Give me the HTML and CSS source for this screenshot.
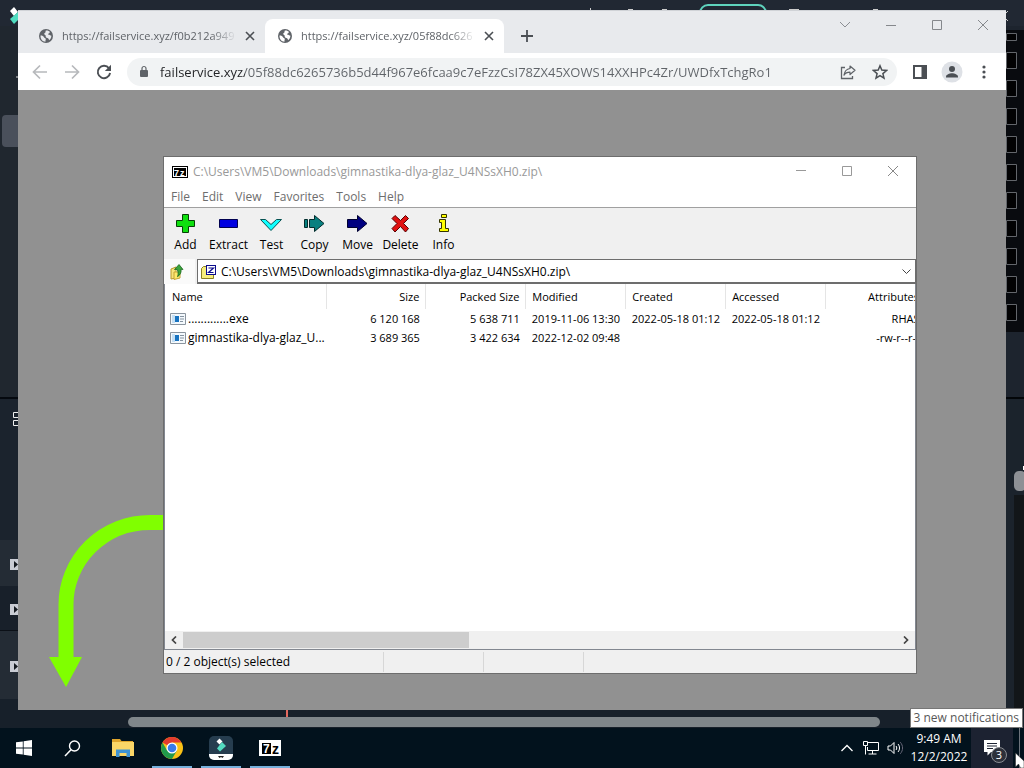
FILE: index.html
```html
<!DOCTYPE html>
<html lang="en">
  <head>
    <meta charset="UTF-8" />
    <meta name="viewport" content="width=device-width, initial-scale=1.0" />
    <title>Desktop</title>
    <link rel="stylesheet" href="styles.css">
  </head>
  <body>
    <main class="desktop">
      <!-- Video editor behind the other windows -->
      <div class="editor">
        <div class="editor-top">
          <svg width="20" height="26" viewBox="0 0 20 26"><path d="M14 7l4 5-4 4-4-5z" fill="#fff"/><path d="M10 19l8-7v8l-4 4z" fill="#4fdcc0"/></svg>
          <svg width="434" height="26" viewBox="0 0 434 26">
            <rect x="110" y="5" width="66" height="20" rx="8" fill="none" stroke="#5fd3bd" stroke-width="2"/>
            <path d="M0 8h1v2H0zM38 9h5v1h-5zM72 9h5v1h-5zM199 9h10v1h-10zM283 9h5v1h-5z" fill="#ccc"/>
            <path d="M418 11l-5 5 5 5" fill="none" stroke="#ccc"/>
          </svg>
        </div>
        <div class="editor-middle">
          <svg width="18" height="684" viewBox="0 26 18 684">
            <rect y="26" width="18" height="372" fill="#20272f"/>
            <rect x="2" y="115" width="24" height="32" rx="4" fill="#4a505b"/>
            <path d="M16 77h2" stroke="#ddd"/>
            <rect y="397" width="18" height="2" fill="#05090f"/>
            <rect y="399" width="18" height="141" fill="#1b232d"/>
            <path d="M18 412.500h-4.500v5h4.500M18 420.500h-4.500v5h4.500" fill="none" stroke="#eee"/>
            <rect y="540" width="18" height="46" fill="#242c35"/>
            <rect y="586" width="18" height="44" fill="#18202a"/>
            <rect y="630" width="18" height="1" fill="#0b1017"/>
            <rect y="631" width="18" height="68" fill="#242c35"/>
            <rect y="699" width="18" height="11" fill="#17202a"/>
            <path d="M10 559h8v11h-8zM10 604h8v11h-8zM10 661h8v11h-8z" fill="#c9ccd4"/>
            <path d="M14 561l4 3.500-4 3.500zM14 606l4 3.500-4 3.500zM14 663l4 3.500-4 3.500z" fill="#151a20"/>
          </svg>
          <svg width="18" height="684" viewBox="0 26 18 684">
            <rect y="26" width="18" height="372" fill="#1d242e"/>
            <rect y="30" width="18" height="302" fill="#090b0f"/>
            <path d="M0 33h10v7H0zM0 52h10v16H0zM0 80h10v16H0zM0 108h10v16H0zM0 136h10v16H0zM0 164h10v16H0zM0 192h10v16H0zM0 220h10v16H0zM0 248h10v16H0zM0 276h10v16H0zM0 304h10v16H0z" transform="translate(.5 .5)" fill="#020203" stroke="#63666b"/>
            <rect y="397" width="18" height="2" fill="#030609"/>
            <rect y="399" width="18" height="311" fill="#1b232c"/>
            <rect x="8" y="495" width="10" height="215" fill="#121619"/>
            <rect x="8" y="471" width="12" height="20" rx="5" fill="#8d9095"/>
            <path d="M17 466h1v4h-1z" fill="#fff"/>
          </svg>
        </div>
        <div class="editor-bottom">
          <span class="playhead"></span>
          <span class="editor-scroll"></span>
        </div>
      </div>

      <section class="browser">
        <div class="tab-strip">
          <div class="tab">
            <svg width="16" height="16" viewBox="0 0 16 16"><circle cx="8" cy="8" r="7" fill="#5f6368"/><path d="M2.500 7.500c2 0 3 .6 3.500 1.800.4 1 1.300.6 1.700 1.500.3.900-.4 1.500-.2 3C4.500 13.600 2.300 11 2.500 7.500zM8 2.500c1.500-.3 3 .3 4.200 1.500-.8.200-.6 1.300-1.500 1.400-.7 0-1 .9-.3 1.200 1.300.3 2 1.200 3 1.200-.1 2-1 3.600-2.400 4.500 0-1.600-.8-2-1.600-2.300-1.200-.4-1.900-1-1.700-2.100.2-1-1.400-.8-1.500-1.900-.100-.9 1-1 1.300-1.800.200-.6-.1-1.300.5-1.700z" fill="#e8eaed"/></svg>
            <a class="tab-title" href="#">https://failservice.xyz/f0b212a949</a>
            <button class="tab-close" aria-label="Close tab"><svg width="10" height="10" viewBox="0 0 10 10"><path d="M1 1l8 8M9 1L1 9" stroke="#4b4f54" stroke-width="1.600"/></svg></button>
          </div>
          <div class="tab active">
            <svg width="16" height="16" viewBox="0 0 16 16"><circle cx="8" cy="8" r="7" fill="#5f6368"/><path d="M2.500 7.500c2 0 3 .6 3.500 1.800.4 1 1.300.6 1.700 1.500.3.900-.4 1.500-.2 3C4.500 13.600 2.300 11 2.500 7.500zM8 2.500c1.500-.3 3 .3 4.200 1.500-.8.200-.6 1.300-1.500 1.400-.7 0-1 .9-.3 1.200 1.300.3 2 1.200 3 1.200-.1 2-1 3.600-2.400 4.500 0-1.600-.8-2-1.600-2.300-1.200-.4-1.900-1-1.700-2.100.2-1-1.400-.8-1.500-1.900-.100-.9 1-1 1.300-1.800.200-.6-.1-1.300.5-1.700z" fill="#fff"/></svg>
            <a class="tab-title" href="#">https://failservice.xyz/05f88dc626</a>
            <button class="tab-close" aria-label="Close tab"><svg width="10" height="10" viewBox="0 0 10 10"><path d="M1 1l8 8M9 1L1 9" stroke="#4b4f54" stroke-width="1.600"/></svg></button>
          </div>
          <button class="new-tab" aria-label="New tab"><svg width="12" height="12" viewBox="0 0 12 12"><path d="M6 0v12M0 6h12" stroke="#4b4f54" stroke-width="1.800"/></svg></button>
          <div class="window-buttons">
            <button aria-label="Search tabs"><svg width="12" height="12" viewBox="0 0 12 12"><path d="M1 3l5 5 5-5" fill="none" stroke="#8b8e93"/></svg></button>
            <button aria-label="Minimize"><svg width="10" height="10" viewBox="0 0 10 10"><path d="M0 5.500h10" stroke="#85888c"/></svg></button>
            <button aria-label="Maximize"><svg width="10" height="10" viewBox="0 0 10 10"><path d="M.5.500h9v9h-9z" fill="none" stroke="#85888c"/></svg></button>
            <button aria-label="Close"><svg width="10" height="10" viewBox="0 0 10 10"><path d="M0 0l10 10M10 0L0 10" stroke="#85888c"/></svg></button>
          </div>
        </div>

        <div class="nav-bar">
          <button aria-label="Back"><svg width="16" height="16" viewBox="0 0 16 16"><path d="M15 8H2M8 1.500L1.500 8 8 14.500" fill="none" stroke="#b7b9bc" stroke-width="1.700"/></svg></button>
          <button aria-label="Forward"><svg width="16" height="16" viewBox="0 0 16 16"><path d="M1 8h13M8 1.500L14.500 8 8 14.500" fill="none" stroke="#b7b9bc" stroke-width="1.700"/></svg></button>
          <button aria-label="Reload"><svg width="16" height="16" viewBox="0 0 16 16"><path d="M13 4.300A6.200 6.200 0 1 0 14.100 9" fill="none" stroke="#4b4f54" stroke-width="1.900"/><path d="M15 .800v6.200H8.800z" fill="#4b4f54"/></svg></button>
          <div class="omnibox">
            <svg width="10" height="14" viewBox="0 0 10 14"><rect x="1" y="5" width="8" height="7" rx="1" fill="#5f6368"/><path d="M3 5.500V3.500a2 2 0 0 1 4 0v2" fill="none" stroke="#5f6368" stroke-width="1.200"/></svg>
            <input class="url" type="text" aria-label="Address" value="failservice.xyz/05f88dc6265736b5d44f967e6fcaa9c7eFzzCsI78ZX45XOWS14XXHPc4Zr/UWDfxTchgRo1">
            <button aria-label="Share"><svg width="16" height="16" viewBox="0 0 16 16"><path d="M5 3.500H1.500v11h11V12" fill="none" stroke="#5f6368" stroke-width="1.300"/><path d="M10 2l5 4.300-5 4.200V8.200c-3 0-4.700.8-6 3C4.500 7.500 6.300 5 10 4.500z" fill="none" stroke="#5f6368" stroke-width="1.200" stroke-linejoin="round"/></svg></button>
            <button aria-label="Bookmark"><svg width="16" height="16" viewBox="0 0 16 16"><path d="M8 1.800l1.800 4.300 4.700.4-3.600 3.100 1.100 4.600L8 11.700l-4 2.500 1.100-4.600L1.500 6.500l4.700-.4z" fill="none" stroke="#4b4f54" stroke-width="1.500"/></svg></button>
          </div>
          <button aria-label="Side panel"><svg width="14" height="14" viewBox="0 0 14 14"><path d="M1 1h12v12H1z" fill="#fff" stroke="#4b4f54" stroke-width="2"/><path d="M8.500 1H13v12H8.500z" fill="#4b4f54"/></svg></button>
          <button aria-label="Profile"><svg width="22" height="22" viewBox="0 0 22 22"><circle cx="11" cy="11" r="10.500" fill="#dee1e6"/><circle cx="11" cy="8" r="3" fill="#4b4f54"/><path d="M5 16.500v-1c0-2 3.500-3.300 6-3.300s6 1.300 6 3.300v1z" fill="#4b4f54"/></svg></button>
          <button aria-label="Menu"><svg width="4" height="14" viewBox="0 0 4 14"><circle cx="2" cy="2" r="1.600" fill="#4b4f54"/><circle cx="2" cy="7" r="1.600" fill="#4b4f54"/><circle cx="2" cy="12" r="1.600" fill="#4b4f54"/></svg></button>
        </div>

        <div class="page"></div>
      </section>

      <svg class="arrow" width="116" height="172" viewBox="0 0 116 172"><path d="M116 7.500h-14A84 82 0 0 0 18 90v54" fill="none" stroke="#80ff00" stroke-width="15"/><path d="M1 142h33l-16 30z" fill="#80ff00"/></svg>

      <section class="archiver">
        <header class="title-bar">
          <svg width="16" height="12" viewBox="0 0 16 12"><rect width="16" height="12" fill="#000"/><rect x="1.500" y="1.500" width="13" height="9" fill="#000" stroke="#fff"/><text x="2" y="10" class="seven">7</text><text x="8" y="10" class="seven">z</text></svg>
          <h1>C:\Users\VM5\Downloads\gimnastika-dlya-glaz_U4NSsXH0.zip\</h1>
          <div class="window-buttons">
            <button aria-label="Minimize"><svg width="10" height="10" viewBox="0 0 10 10"><path d="M0 4.500h10" stroke="#999"/></svg></button>
            <button aria-label="Maximize"><svg width="10" height="10" viewBox="0 0 10 10"><path d="M.5.500h9v9h-9z" fill="none" stroke="#999"/></svg></button>
            <button aria-label="Close"><svg width="10" height="10" viewBox="0 0 10 10"><path d="M0 0l10 10M10 0L0 10" stroke="#888"/></svg></button>
          </div>
        </header>

        <nav class="menu-bar">
          <button>File</button>
          <button>Edit</button>
          <button>View</button>
          <button>Favorites</button>
          <button>Tools</button>
          <button>Help</button>
        </nav>

        <div class="tool-bar">
          <button><svg width="24" height="20" viewBox="1 0 24 20"><path d="M9.500.500h6v6h6v6h-6v6h-6v-6h-6v-6h6z" fill="#0fe00f" stroke="#064006"/></svg>Add</button>
          <button><svg width="24" height="20" viewBox="1 0 24 20"><path d="M3.500 5.500h18v8h-18z" fill="#0000e0" stroke="#000050"/></svg>Extract</button>
          <button><svg width="24" height="20" viewBox="1 0 24 20"><path d="M1.500 5.500h5l5.500 5 5.500-5h5L12 16.500z" fill="#1ff" stroke="#075050"/></svg>Test</button>
          <button><svg width="24" height="20" viewBox="1 0 24 20"><path d="M2.500 5.500h3v8h-3zM7.500 5.500h5v-4l9.500 8-9.500 8v-4h-5z" fill="#088080" stroke="#032c2c"/></svg>Copy</button>
          <button><svg width="24" height="20" viewBox="1 0 24 20"><path d="M2.500 5.500h10v-4l9.500 8-9.500 8v-4h-10z" fill="#000080" stroke="#000030"/></svg>Move</button>
          <button><svg width="24" height="20" viewBox="1 0 24 20"><path d="M4 4.500L7 1.500l5.500 5 5-5 3 3-5 5 5 5-3 3.500-5-5.500L7 18l-3-3.500 5-5z" fill="#e01010" stroke="#500"/></svg>Delete</button>
          <button><svg width="24" height="20" viewBox="1 0 24 20"><path d="M10.500.500h5v3h-5zM8.500 5.500h6v9h3v3h-9v-3h2v-6h-2z" fill="#ff0" stroke="#333300"/></svg>Info</button>
        </div>

        <div class="address-bar">
          <button class="up" aria-label="Up one level"><svg width="16" height="18" viewBox="0 0 16 18"><path d="M2 6l5-2v11l-5 1z" fill="#f7e37a" stroke="#b7972c"/><path d="M5 9h6v6l-6 1.500z" fill="#ffe96b" stroke="#c5a437"/><path d="M5.500 6.500L10 1.500l4 5-2-.300c.5 3-.5 5.500-3.500 7.500 1-2.500.8-5-.3-7.300z" fill="#39a53c" stroke="#19661c" stroke-width=".800"/></svg></button>
          <div class="path">
            <svg width="17" height="16" viewBox="0 0 17 16"><path d="M1.500 4.500l2-2h4v2h6v10h-12z" fill="#f7ee7c" stroke="#8b8023"/><rect x="6.500" y="1.500" width="9" height="9" fill="#fff" stroke="#0b0b8c"/><path d="M8.500 4h5l-5 4.500h5" fill="none" stroke="#0b0b8c" stroke-width="1.200"/></svg>
            <select aria-label="Folder">
              <option>C:\Users\VM5\Downloads\gimnastika-dlya-glaz_U4NSsXH0.zip\</option>
            </select>
            <svg width="9" height="6" viewBox="0 0 9 6"><path d="M.5.500l4 4 4-4" fill="none" stroke="#444"/></svg>
          </div>
        </div>

        <div class="file-list">
          <table>
            <colgroup>
              <col class="col-name"><col><col><col><col><col><col>
            </colgroup>
            <thead>
              <tr>
                <th>Name</th>
                <th class="num">Size</th>
                <th class="num">Packed Size</th>
                <th>Modified</th>
                <th>Created</th>
                <th>Accessed</th>
                <th class="num">Attributes</th>
              </tr>
            </thead>
            <tbody>
              <tr>
                <td class="name"><svg width="16" height="12" viewBox="0 0 16 12"><path d="M.5.500h15v11H.500z" fill="#f4f9fd" stroke="#8a949e"/><path d="M2 2h3v8H2z" fill="#c5e0f5"/><path d="M5 3h4v6H5z" fill="#1873c0"/><path d="M10 3.500h4M10 6h4M10 8.500h3" stroke="#8593a0"/></svg>.............exe</td>
                <td class="num">6 120 168</td>
                <td class="num">5 638 711</td>
                <td>2019-11-06 13:30</td>
                <td>2022-05-18 01:12</td>
                <td>2022-05-18 01:12</td>
                <td class="num">RHAS</td>
              </tr>
              <tr>
                <td class="name"><svg width="16" height="12" viewBox="0 0 16 12"><path d="M.5.500h15v11H.500z" fill="#f4f9fd" stroke="#8a949e"/><path d="M2 2h3v8H2z" fill="#c5e0f5"/><path d="M5 3h4v6H5z" fill="#1873c0"/><path d="M10 3.500h4M10 6h4M10 8.500h3" stroke="#8593a0"/></svg>gimnastika-dlya-glaz_U...</td>
                <td class="num">3 689 365</td>
                <td class="num">3 422 634</td>
                <td>2022-12-02 09:48</td>
                <td></td>
                <td></td>
                <td class="num">-rw-r--r--</td>
              </tr>
            </tbody>
          </table>
        </div>

        <div class="scroll-bar">
          <button aria-label="Scroll left"><svg width="6" height="8" viewBox="0 0 6 8"><path d="M5 .500L1.500 4 5 7.500" fill="none" stroke="#444" stroke-width="1.700"/></svg></button>
          <div class="track"><span class="thumb"></span></div>
          <button aria-label="Scroll right"><svg width="6" height="8" viewBox="0 0 6 8"><path d="M1 .500L4.500 4 1 7.500" fill="none" stroke="#444" stroke-width="1.700"/></svg></button>
        </div>

        <footer class="status-bar">
          <span class="status-main">0 / 2 object(s) selected</span>
          <span></span>
          <span></span>
        </footer>
      </section>
    </main>

    <footer class="taskbar">
      <button aria-label="Start"><svg width="16" height="16" viewBox="0 0 16 16"><path d="M0 2.300L6.800 1.400v6.200H0zM7.600 1.300L16 0v7.600H7.600zM0 8.400h6.800v6.200L0 13.700zM7.600 8.400H16V16l-8.400-1.300z" fill="#fff"/></svg></button>
      <button aria-label="Search"><svg width="17" height="17" viewBox="0 0 17 17"><circle cx="10.500" cy="6" r="5" fill="none" stroke="#fff" stroke-width="1.400"/><path d="M7 9.800L1 16" stroke="#fff" stroke-width="1.500"/></svg></button>
      <div class="apps">
        <button aria-label="File Explorer"><svg width="22" height="18" viewBox="0 0 22 18"><path d="M0 0h8l1.500 2H21v4H0z" fill="#e0a52c"/><path d="M0 3h22v14H0z" fill="#fbd667"/><path d="M4 10.500h14V18h-3.500v-4h-7v4H4z" fill="#3f93d2"/></svg></button>
        <button class="running" aria-label="Chrome"><svg width="24" height="24" viewBox="0 0 24 24"><circle cx="12" cy="12" r="11" fill="#fbc116"/><path d="M12 12L2.500 6.500A11 11 0 0 1 21.500 6.500H12z" fill="#e33b2e"/><path d="M2.500 6.500A11 11 0 0 0 12 23l4.800-8.300L12 12 7.200 14.700z" fill="#219a4b"/><circle cx="12" cy="12" r="5.500" fill="#fff"/><circle cx="12" cy="12" r="4.300" fill="#3a7bea"/></svg></button>
        <button class="running" aria-label="Filmora"><svg width="24" height="24" viewBox="0 0 24 24"><rect width="24" height="24" rx="5" fill="#263d4f"/><path d="M0 18h24v1a5 5 0 0 1-5 5H5a5 5 0 0 1-5-5z" fill="#fff"/><path d="M9 20h6l-1.500 2-1.500-1-1.500 1z" fill="#222"/><path d="M10.500 2.500l3 3-3 3-3-3z" fill="#fff"/><path d="M13 6l4 4-6 5.500-3-3z" fill="#54dcc1"/></svg></button>
        <button class="running" aria-label="7-Zip"><svg width="22" height="16" viewBox="0 0 22 16"><rect width="22" height="16" fill="#fff"/><rect x="3" y="3" width="9" height="11" fill="#000"/><text x="4" y="13" class="seven-light">7</text><text x="13" y="14" class="seven-dark">z</text></svg></button>
      </div>

      <div class="tray">
        <button aria-label="Show hidden icons"><svg width="12" height="8" viewBox="0 0 12 8"><path d="M.5 7L6 1.500 11.500 7" fill="none" stroke="#fff" stroke-width="1.300"/></svg></button>
        <button aria-label="Network"><svg width="16" height="14" viewBox="0 0 16 14"><path d="M5 1.500h10.500v8H4.500V6M9.500 10v3M5.500 13h8M.5.500h4v4h-4zM2.500 5v8.500" fill="none" stroke="#fff"/></svg></button>
        <button aria-label="Volume"><svg width="17" height="14" viewBox="0 0 17 14"><path d="M1 5h2.500L7 1.500v11L3.500 9H1z" fill="none" stroke="#fff"/><path d="M9 5c1 1.200 1 2.800 0 4M11 3c2 2.300 2 5.700 0 8" fill="none" stroke="#fff"/><path d="M13.300 1.200c3 3.400 3 8.200 0 11.600" fill="none" stroke="#667"/></svg></button>
      </div>
      <button class="clock"><span>9:49 AM</span><span>12/2/2022</span></button>
      <button class="notifications" aria-label="3 new notifications">
        <svg width="16" height="16" viewBox="0 0 16 16"><path d="M0 0h16v12H7l-3.500 3.500V12H0z" fill="#fff"/><path d="M3 3.500h10M3 6h10M3 8.500h6" stroke="#1e2434"/></svg>
        <span class="count">3</span>
      </button>
      <span class="show-desktop"></span>
    </footer>

    <div class="tooltip">3 new notifications</div>
    <svg class="cursor" width="9" height="16" viewBox="0 0 9 16"><path d="M.5 1v14l3-3 2 4H9V9z" fill="#fff" stroke="#222" stroke-width=".500"/></svg>
  </body>
</html>
```

FILE: styles.css
```css
* {
  margin: 0;
  padding: 0;
  box-sizing: border-box;
}

body {
  display: flex;
  flex-direction: column;
  height: 100vh;
  overflow: hidden;
  position: relative;
  font-family: 'Open Sans', 'Noto Sans', sans-serif;
  font-size: 12px;
  line-height: 16px;
  color: #000;
  background: #1d242e;
}

button {
  display: flex;
  align-items: center;
  justify-content: center;
  flex: none;
  border: none;
  background: none;
  font: inherit;
  color: inherit;
}

svg {
  display: block;
  flex: none;
}

.desktop {
  flex: 1;
  position: relative;
  min-height: 0;
}

/* Editor in the background */
.editor {
  display: flex;
  flex-direction: column;
  height: 100%;
  overflow: hidden;
}

.editor-top {
  display: flex;
  justify-content: space-between;
  height: 26px;
  background: #212833;
}

.editor-middle {
  display: flex;
  justify-content: space-between;
  flex: 1;
  overflow: hidden;
}

.editor-bottom {
  position: relative;
  height: 18px;
  padding: 7px 144px 1px 128px;
  background: #17202a;
}

.editor-scroll {
  display: block;
  height: 10px;
  border-radius: 5px;
  background: #7f868a;
}

.playhead {
  position: absolute;
  left: 286px;
  top: 0;
  width: 2px;
  height: 7px;
  background: #e2695f;
}

/* Browser window */
.browser {
  position: absolute;
  inset: 10px 18px 18px;
  display: flex;
  flex-direction: column;
  border-top: 1px solid #d0d3d7;
  background: #fff;
}

.tab-strip {
  display: flex;
  align-items: flex-end;
  height: 42px;
  padding-left: 8px;
  background: #e8eaed;
}

.tab {
  display: flex;
  align-items: center;
  gap: 8px;
  width: 239px;
  height: 34px;
  padding: 0 10px 0 12px;
  color: #5f6368;
}

.tab.active {
  border-radius: 8px 8px 0 0;
  background: #fff;
}

.tab-title {
  flex: 1;
  overflow: hidden;
  white-space: nowrap;
  font-size: 11px;
  color: inherit;
  text-decoration: none;
  mask-image: linear-gradient(to right, #000 85%, transparent);
}

.tab-close {
  width: 10px;
}

.new-tab {
  width: 28px;
  height: 34px;
  margin-left: 9px;
}

.window-buttons {
  display: flex;
  align-self: flex-start;
  margin-left: auto;
}

.window-buttons button {
  width: 46px;
  height: 28px;
}

.nav-bar {
  display: flex;
  align-items: center;
  height: 37px;
  padding: 0 6px;
}

.nav-bar > button {
  width: 32px;
  height: 28px;
}

.omnibox {
  display: flex;
  align-items: center;
  flex: 1;
  height: 28px;
  margin: 0 7px;
  padding: 0 1px 0 12px;
  border-radius: 14px;
  background: #f1f3f4;
}

.omnibox button {
  width: 32px;
  height: 28px;
}

/* Host part is dark, the rest of the address is grey */
.url {
  flex: 1;
  min-width: 0;
  height: 24px;
  margin-left: 11px;
  border: none;
  outline: none;
  font: 13px/24px 'Open Sans', 'Noto Sans', sans-serif;
  background: linear-gradient(to right, #202124 85px, #5f6368 85px);
  background-clip: text;
  -webkit-text-fill-color: transparent;
}

.page {
  flex: 1;
  background: #919191;
}

.arrow {
  position: absolute;
  left: 48px;
  top: 515px;
}

/* Archiver window */
.archiver {
  position: absolute;
  inset: 156px 107px 54px 163px;
  display: flex;
  flex-direction: column;
  border: 1px solid #6d6d6d;
  background: #fff;
}

.title-bar {
  display: flex;
  align-items: center;
  height: 29px;
  padding-left: 8px;
}

.title-bar h1 {
  margin-left: 5px;
  font-size: 12px;
  font-weight: 400;
  color: #999;
}

.seven {
  font: bold 9px 'Liberation Sans', sans-serif;
  fill: #fff;
}

.menu-bar {
  display: flex;
  height: 22px;
  padding-left: 1px;
  border-bottom: 1px solid #a0a0a0;
  color: #6d6d6d;
}

.menu-bar button {
  padding: 0 6px;
}

.tool-bar {
  display: flex;
  height: 51px;
  background: #f0f0f0;
}

.tool-bar button {
  flex-direction: column;
  justify-content: flex-start;
  gap: 3px;
  width: 43px;
  padding-top: 6px;
}

.address-bar {
  display: flex;
  height: 25px;
  background: #f0f0f0;
}

.up {
  width: 31px;
  padding-right: 6px;
  background: #fafafa;
}

.path {
  display: flex;
  align-items: center;
  flex: 1;
  margin-left: 2px;
  padding: 1px 4px 0 2px;
  border: 1px solid #6d6d6d;
  border-bottom-width: 2px;
  background: #fff;
}

.path select {
  flex: 1;
  min-width: 0;
  margin-left: 4px;
  border: none;
  outline: none;
  appearance: none;
  font: inherit;
  color: #000;
  background: none;
}

.file-list {
  flex: 1;
  overflow: hidden;
  border-left: 1px solid #828790;
  border-right: 1px solid #828790;
}

table {
  width: 761px;
  table-layout: fixed;
  border-collapse: collapse;
  font-size: 11px;
}

.col-name {
  width: 161px;
}

th,
td {
  height: 19px;
  padding: 0 6px;
  text-align: left;
  font-weight: 400;
  white-space: nowrap;
}

th {
  height: 25px;
  border-right: 1px solid #e5e5e5;
}

th:first-child {
  padding-left: 7px;
}

.num {
  text-align: right;
}

.name {
  padding: 0 0 0 5px;
  font-size: 12px;
}

.name svg {
  display: inline-block;
  vertical-align: -2px;
  margin-right: 2px;
}

.scroll-bar {
  display: flex;
  height: 18px;
  border-left: 1px solid #828790;
  border-right: 1px solid #828790;
  background: #f0f0f0;
}

.scroll-bar button {
  width: 18px;
}

.track {
  flex: 1;
  padding: 1px 0;
}

.thumb {
  display: block;
  width: 40%;
  height: 100%;
  background: #cdcdcd;
}

.status-bar {
  display: flex;
  height: 24px;
  border-top: 1px solid #828790;
  background: #f0f0f0;
}

.status-bar span {
  width: 100px;
  margin: 2px 0 1px;
  padding: 2px;
  border-right: 1px solid #d7d7d7;
}

.status-bar .status-main {
  width: 220px;
}

/* Taskbar */
.taskbar {
  display: flex;
  height: 40px;
  color: #fff;
  background: #02121d;
}

.taskbar > button {
  width: 48px;
}

.apps {
  display: flex;
  gap: 1px;
  margin-left: 3px;
}

.apps button {
  width: 48px;
  position: relative;
}

.running::after {
  content: '';
  position: absolute;
  left: 4px;
  right: 4px;
  bottom: 0;
  height: 2px;
  background: #76b0dc;
}

.seven-light,
.seven-dark {
  font: bold 12px 'Liberation Sans', sans-serif;
  fill: #fff;
}

.seven-dark {
  font-size: 14px;
  fill: #000;
}

.tray {
  display: flex;
  margin-left: auto;
}

.tray button {
  width: 24px;
}

.taskbar .clock {
  flex-direction: column;
  width: 64px;
  line-height: 18px;
  white-space: nowrap;
}

.taskbar .notifications {
  position: relative;
  width: 42px;
  background: #1c2231;
}

.count {
  position: absolute;
  right: 6px;
  bottom: 5px;
  width: 16px;
  height: 16px;
  border: 1px solid #8a8d93;
  border-radius: 50%;
  background: #2c303a;
  font-size: 11px;
  line-height: 14px;
}

.show-desktop {
  width: 5px;
  margin-left: 6px;
  border-left: 1px solid #6c737b;
}

.tooltip {
  position: absolute;
  right: 1px;
  bottom: 40px;
  padding: 1px 3px;
  border: 1px solid #767676;
  background: #fff;
  color: #575757;
  white-space: nowrap;
}

.cursor {
  position: absolute;
  right: 0;
  bottom: 0;
}
```
